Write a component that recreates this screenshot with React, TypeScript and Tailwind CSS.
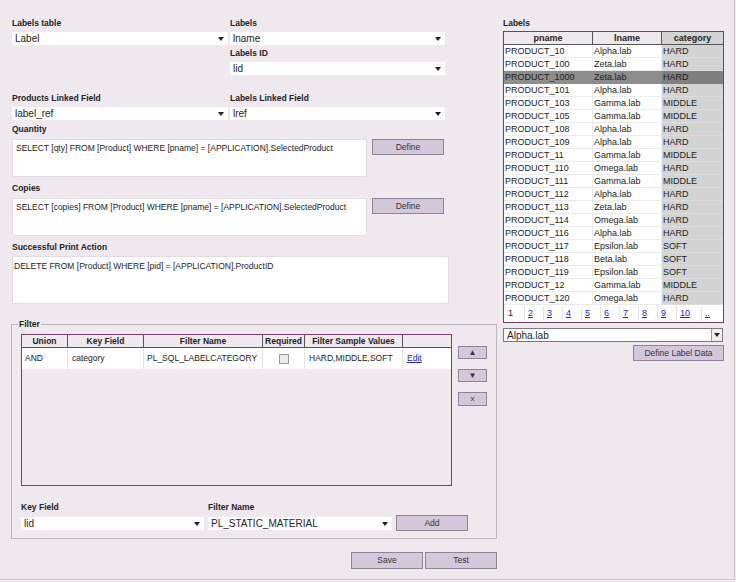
import React from 'react';

const labelRows = [
  ['PRODUCT_10', 'Alpha.lab', 'HARD'],
  ['PRODUCT_100', 'Zeta.lab', 'HARD'],
  ['PRODUCT_1000', 'Zeta.lab', 'HARD'],
  ['PRODUCT_101', 'Alpha.lab', 'HARD'],
  ['PRODUCT_103', 'Gamma.lab', 'MIDDLE'],
  ['PRODUCT_105', 'Gamma.lab', 'MIDDLE'],
  ['PRODUCT_108', 'Alpha.lab', 'HARD'],
  ['PRODUCT_109', 'Alpha.lab', 'HARD'],
  ['PRODUCT_11', 'Gamma.lab', 'MIDDLE'],
  ['PRODUCT_110', 'Omega.lab', 'HARD'],
  ['PRODUCT_111', 'Gamma.lab', 'MIDDLE'],
  ['PRODUCT_112', 'Alpha.lab', 'HARD'],
  ['PRODUCT_113', 'Zeta.lab', 'HARD'],
  ['PRODUCT_114', 'Omega.lab', 'HARD'],
  ['PRODUCT_116', 'Alpha.lab', 'HARD'],
  ['PRODUCT_117', 'Epsilon.lab', 'SOFT'],
  ['PRODUCT_118', 'Beta.lab', 'SOFT'],
  ['PRODUCT_119', 'Epsilon.lab', 'SOFT'],
  ['PRODUCT_12', 'Gamma.lab', 'MIDDLE'],
  ['PRODUCT_120', 'Omega.lab', 'HARD'],
];

const pages = ['2', '3', '4', '5', '6', '7', '8', '9', '10', '...'];

function Arrow() {
  return (
    <svg width="6" height="4" viewBox="0 0 6 4" className="shrink-0">
      <path d="M0 0h6L3 4z" fill="#222" />
    </svg>
  );
}

function Label({ children }: { children: React.ReactNode }) {
  return <div className="h-[14px] leading-[14px] font-bold text-[#222]">{children}</div>;
}

function Dropdown({ value, width }: { value: string; width: string }) {
  return (
    <div className={`${width} h-[13px] bg-white flex items-center justify-between pl-[3px] pr-[4px] text-[10px] text-[#222]`}>
      <span>{value}</span>
      <Arrow />
    </div>
  );
}

function Btn({ children, className = '' }: { children: React.ReactNode; className?: string }) {
  return (
    <button
      className={`bg-[#d4c7dc] border border-[#8a8494] text-[#333] flex items-center justify-center ${className}`}
    >
      {children}
    </button>
  );
}

export default function App() {
  return (
    <div className="w-[736px] h-[582px] bg-[#efe9ef] font-['Liberation_Sans',Arial,sans-serif] text-[8.5px] text-[#222]">
      <div className="w-[735px] h-[580px] border-r border-b border-[#cdc6cd] flex pt-[16px]">
        {/* Left column */}
        <div className="ml-[11px] w-[486px] flex flex-col">
          <div className="pl-[1px] flex gap-[2px]">
            <div className="w-[216px]">
              <Label>Labels table</Label>
              <div className="mt-[2px]">
                <Dropdown value="Label" width="w-[216px]" />
              </div>
            </div>
            <div className="w-[215px]">
              <Label>Labels</Label>
              <div className="mt-[2px]">
                <Dropdown value="lname" width="w-[215px]" />
              </div>
              <div className="mt-[1px]">
                <Label>Labels ID</Label>
              </div>
              <div className="mt-[2px]">
                <Dropdown value="lid" width="w-[215px]" />
              </div>
            </div>
          </div>

          <div className="pl-[1px] flex gap-[2px] mt-[16px]">
            <div className="w-[216px]">
              <Label>Products Linked Field</Label>
              <div className="mt-[2px]">
                <Dropdown value="label_ref" width="w-[216px]" />
              </div>
            </div>
            <div className="w-[215px]">
              <Label>Labels Linked Field</Label>
              <div className="mt-[2px]">
                <Dropdown value="lref" width="w-[215px]" />
              </div>
            </div>
          </div>

          {/* Quantity */}
          <div className="pl-[1px] mt-[2px]">
            <Label>Quantity</Label>
            <div className="mt-[3px] flex gap-[5px]">
              <div className="w-[355px] h-[38px] bg-white border border-[#e2dde2] px-[3px] pt-[2px]">
                SELECT [qty] FROM [Product] WHERE [pname] = [APPLICATION].SelectedProduct
              </div>
              <Btn className="w-[72px] h-[16px]">Define</Btn>
            </div>
          </div>

          {/* Copies */}
          <div className="pl-[1px] mt-[4px]">
            <Label>Copies</Label>
            <div className="mt-[3px] flex gap-[5px]">
              <div className="w-[355px] h-[38px] bg-white border border-[#e2dde2] px-[3px] pt-[2px]">
                SELECT [copies] FROM [Product] WHERE [pname] = [APPLICATION].SelectedProduct
              </div>
              <Btn className="w-[72px] h-[16px]">Define</Btn>
            </div>
          </div>

          {/* Successful Print Action */}
          <div className="pl-[1px] mt-[4px]">
            <Label>Successful Print Action</Label>
            <div className="mt-[2px] w-[437px] h-[48px] bg-white border border-[#e2dde2] px-[1px] pt-[3px]">
              DELETE FROM [Product] WHERE [pid] = [APPLICATION].ProductID
            </div>
          </div>

          {/* Filter */}
          <fieldset className="mt-[14px] w-[486px] border border-[#bcb6bc] p-0 m-0">
            <legend className="ml-[6px] px-[1px] font-bold leading-[12px]">Filter</legend>
            <div className="pl-[9px] pt-[4px]">
              <div className="flex">
                <div className="w-[431px] h-[152px] border border-[#7a3d68]">
                  <div className="grid grid-cols-[46px_76px_119px_42px_98px_48px] h-[13px] border-b border-[#555] font-bold">
                    <div className="border-r border-[#555] text-center leading-[13px]">Union</div>
                    <div className="border-r border-[#555] text-center leading-[13px]">Key Field</div>
                    <div className="border-r border-[#555] text-center leading-[13px]">Filter Name</div>
                    <div className="border-r border-[#555] text-center leading-[13px]">Required</div>
                    <div className="border-r border-[#555] text-center leading-[13px]">Filter Sample Values</div>
                    <div />
                  </div>
                  <div className="grid grid-cols-[46px_76px_119px_42px_98px_48px] h-[21px] bg-white items-stretch">
                    <div className="border-r border-[#e4e4e4] pl-[3px] flex items-center">AND</div>
                    <div className="border-r border-[#e4e4e4] pl-[4px] flex items-center">category</div>
                    <div className="border-r border-[#e4e4e4] pl-[3px] flex items-center">PL_SQL_LABELCATEGORY</div>
                    <div className="border-r border-[#e4e4e4] flex items-center justify-center">
                      <div className="w-[10px] h-[10px] border border-[#9a9a9a] bg-[#ececec]" />
                    </div>
                    <div className="border-r border-[#e4e4e4] pl-[4px] flex items-center">HARD,MIDDLE,SOFT</div>
                    <div className="pl-[4px] flex items-center">
                      <span className="text-[#2323c8] underline">Edit</span>
                    </div>
                  </div>
                </div>
                <div className="ml-[6px] pt-[12px] flex flex-col gap-[10px]">
                  <Btn className="w-[29px] h-[13px] text-[8px]">▲</Btn>
                  <Btn className="w-[29px] h-[13px] text-[8px]">▼</Btn>
                  <Btn className="w-[29px] h-[14px] text-[8px]">x</Btn>
                </div>
              </div>

              <div className="mt-[14px] flex items-end gap-[4px] pb-[8px]">
                <div className="w-[183px]">
                  <Label>Key Field</Label>
                  <div className="mt-[3px]">
                    <Dropdown value="lid" width="w-[183px]" />
                  </div>
                </div>
                <div className="w-[184px]">
                  <Label>Filter Name</Label>
                  <div className="mt-[3px]">
                    <Dropdown value="PL_STATIC_MATERIAL" width="w-[184px]" />
                  </div>
                </div>
                <Btn className="w-[72px] h-[16px] mb-[-1px]">Add</Btn>
              </div>
            </div>
          </fieldset>

          <div className="mt-[13px] flex justify-end gap-[2px]">
            <Btn className="w-[72px] h-[17px]">Save</Btn>
            <Btn className="w-[72px] h-[17px]">Test</Btn>
          </div>
        </div>

        {/* Right column */}
        <div className="ml-[6px] w-[221px] flex flex-col">
          <Label>Labels</Label>
          <div className="mt-[1px] w-[221px] border border-[#7a3d68] text-[9px]">
            <div className="grid grid-cols-[89px_69px_61px] h-[13px] border-b border-[#555] font-bold">
              <div className="border-r border-[#555] text-center leading-[12px]">pname</div>
              <div className="border-r border-[#555] text-center leading-[12px]">lname</div>
              <div className="bg-[#d3d3d3] text-center leading-[12px]">category</div>
            </div>
            {labelRows.map((r, i) => {
              const sel = i === 2;
              return (
                <div
                  key={r[0]}
                  className={`grid grid-cols-[89px_69px_61px] h-[13px] leading-[12px] ${sel ? 'bg-[#8d8d8d]' : 'bg-white'}`}
                >
                  <div className={`pl-[1px] border-r border-b ${sel ? 'border-[#8d8d8d]' : 'border-[#ebebeb]'}`}>{r[0]}</div>
                  <div className={`pl-[1px] border-r border-b ${sel ? 'border-[#8d8d8d]' : 'border-[#ebebeb]'}`}>{r[1]}</div>
                  <div className={`pl-[1px] border-b ${sel ? 'bg-[#7f7f7f] border-[#7f7f7f]' : 'bg-[#d3d3d3] border-[#dcdcdc]'}`}>{r[2]}</div>
                </div>
              );
            })}
            <div className="h-[17px] bg-white flex items-center py-[2px] pr-[3px]">
              <div className="w-[20px] pl-[4px] h-full flex items-center">1</div>
              {pages.map((p) => (
                <div
                  key={p}
                  className={`${p === '10' ? 'w-[25px]' : 'w-[19px]'} h-full border-l border-[#e2e2e2] pl-[3px] flex items-center`}
                >
                  <span className="text-[#2323c8] underline">{p === '...' ? '..' : p}</span>
                </div>
              ))}
            </div>
          </div>
          <div className="mt-[5px] w-[220px] h-[14px] bg-white border border-[#7a7a7a] flex items-center justify-between pl-[3px] text-[10px]">
            <span>Alpha.lab</span>
            <div className="w-[11px] h-[12px] border-l border-[#9a9a9a] bg-[#f0f0f0] flex items-center justify-center">
              <Arrow />
            </div>
          </div>
          <Btn className="mt-[3px] self-end w-[91px] h-[16px]">Define Label Data</Btn>
        </div>
      </div>
    </div>
  );
}
